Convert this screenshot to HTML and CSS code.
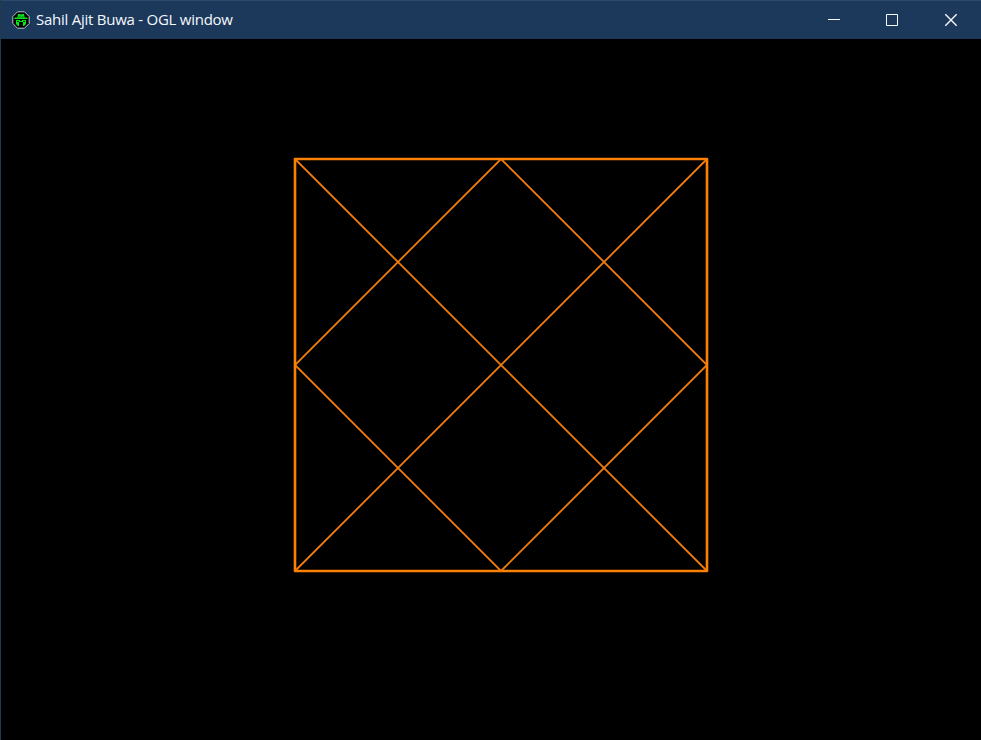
FILE: index.html
```
<!DOCTYPE html>
<html lang="en">
<head>
<meta charset="utf-8">
<title>Sahil Ajit Buwa - OGL window</title>
<link rel="stylesheet" href="styles.css">
</head>
<body>
<div class="window">
  <header class="titlebar">
    <svg class="app-icon" viewBox="0 0 18 18" aria-hidden="true">
      <path d="M5.5 .8h7l4.7 4.7v7l-4.7 4.7h-7L.8 12.5v-7z" fill="#000" stroke="#b4c2ce"/>
      <path d="M6 3h2l1 .8L10 3h2l.7 3.5h2.8V8h-13V6.500h2.800z" fill="#0ce01c"/>
      <path d="M4 9h4v1h2V9h4v4l-2 2h-1v-4H7v4H6l-2-2z" fill="#08e817"/>
      <path d="M5.500 6h7" stroke="#067010" stroke-width=".8"/>
      <path d="M5 10.500h2M11 10.500h2" stroke="#032b06"/>
    </svg>
    <span class="title">Sahil Ajit Buwa - OGL window</span>
    <div class="controls">
      <svg class="control" viewBox="0 0 12 12"><path d="M0 5.5h12"/></svg>
      <svg class="control" viewBox="0 0 12 12"><path d="M.5 .5h11v11H.5z"/></svg>
      <svg class="control close" viewBox="0 0 12 12"><path d="M.3 .3l11.4 11.4M11.7 .3L.3 11.7"/></svg>
    </div>
  </header>
  <main class="viewport">
    <svg class="figure" viewBox="0 0 416 416">
      <path class="diagonals" d="M2 2l412 412M414 2L2 414M208 2L414 208 208 414 2 208z"/>
      <path class="frame" d="M2 2h412v412H2z"/>
    </svg>
  </main>
</div>
</body>
</html>
```
FILE: styles.css
```
* {
  box-sizing: border-box;
}

body {
  margin: 0;
  background: #000;
  overflow: hidden;
}

.window {
  display: flex;
  flex-direction: column;
  width: 981px;
  height: 740px;
  border-left: 1px solid #26384a;
}

.titlebar {
  display: flex;
  align-items: center;
  flex: 0 0 39px;
  padding: 0 24px 0 11px;
  border-top: 1px solid #2b4a6b;
  background: #1c395c;
  color: #f4f8fc;
}

.app-icon {
  width: 18px;
  height: 18px;
  margin-top: -1px;
}

.title {
  margin: -2px 0 0 6px;
  font: 15px/20px "Open Sans", "Noto Sans", sans-serif;
  letter-spacing: -0.25px;
  white-space: nowrap;
}

.controls {
  display: flex;
  gap: 46px;
  margin-left: auto;
}

.control {
  width: 12px;
  height: 12px;
  fill: none;
  stroke: #f5f9fd;
  overflow: visible;
}

.close {
  margin-left: 1px;
  stroke-width: 1.4;
}

.viewport {
  flex: 1;
  padding: 118px 0 0 292px;
  background: #000;
}

.figure {
  display: block;
  width: 416px;
  height: 416px;
  fill: none;
  stroke: #ff8000;
}

.frame {
  stroke-width: 2.6;
  stroke: #fb8004;
  stroke-linejoin: round;
}

.diagonals {
  stroke-width: 1.8;
  stroke: #ef7c0c;
}
```
